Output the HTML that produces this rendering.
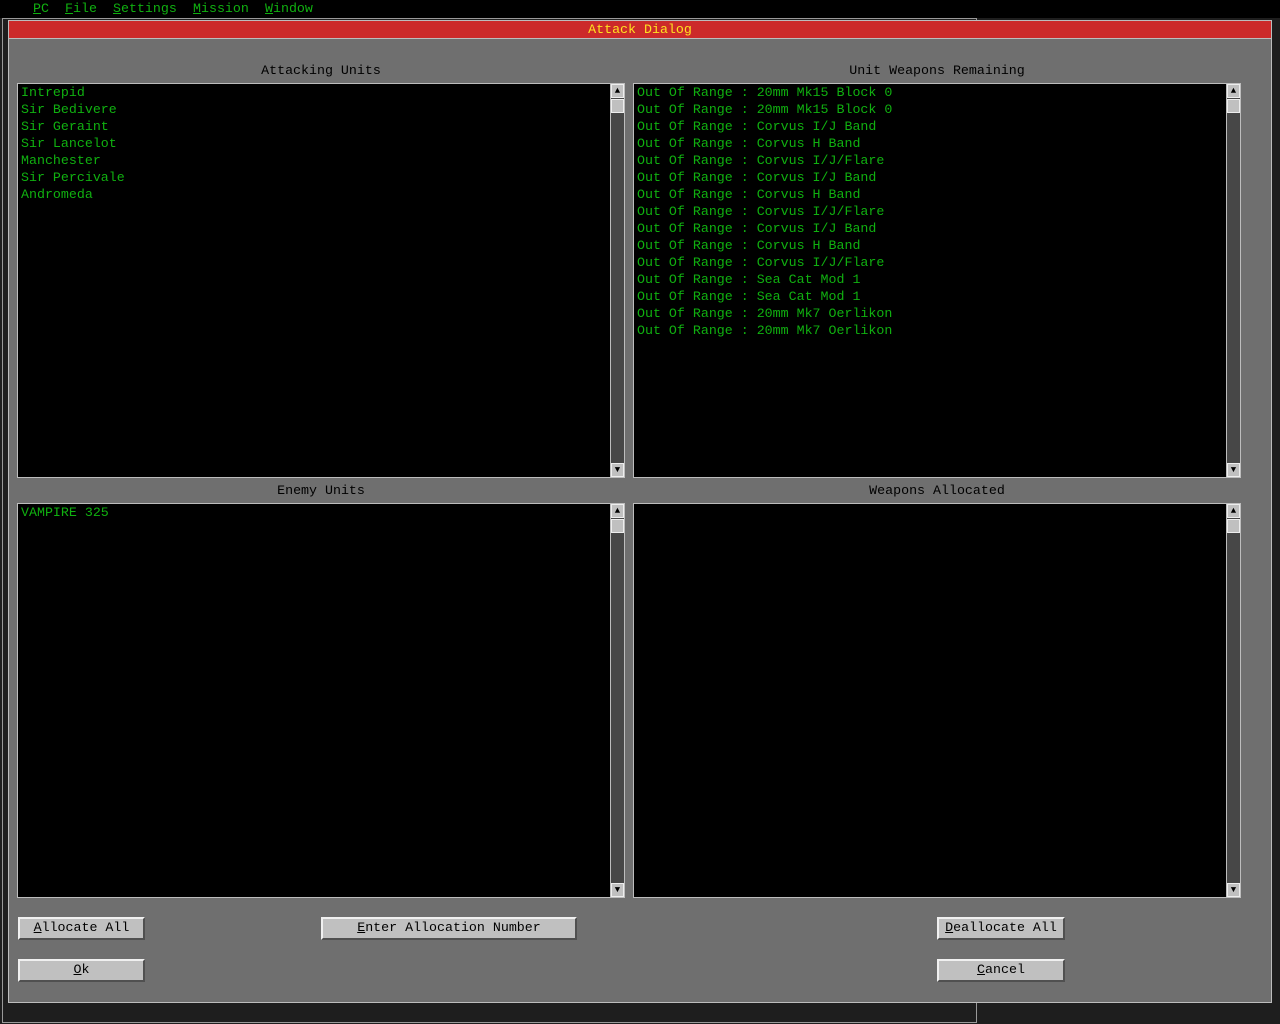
<!DOCTYPE html><html><head><style>
body{margin:0;width:1280px;height:1024px;background:#1e1e1e;position:relative;overflow:hidden;font-family:"Liberation Mono",monospace;font-size:13.3px}
.a{position:absolute}
.menu{left:0;top:0;width:1280px;height:18px;background:#000;color:#10b010}
.menu span{position:absolute;top:0;line-height:17px}
.menu u{text-decoration:underline}
#dlg{left:8px;top:20px;width:1262px;height:981px;background:#6f6f6f;border:1px solid #bdbdbd}
.title{left:0;top:0;width:1262px;height:17px;background:#cc2a2a;border-bottom:1px solid #bdbdbd;color:#ffe020;text-align:center;line-height:17px}
.lbl{color:#000;text-align:center;line-height:17px}
.list{background:#000;border:1px solid #bdbdbd;color:#10b010;line-height:17px;padding:0 3px;box-sizing:border-box;white-space:pre}
.sb{background:#474747;border:1px solid #bdbdbd;box-sizing:border-box;width:15px}
.btn{position:absolute;left:0;width:13px;height:14px;background:#c0c0c0;border:1px solid #eee;box-sizing:border-box;font-size:9px;line-height:12px;text-align:center;color:#000}
.b{background:#c0c0c0;border:2px solid;border-color:#f0f0f0 #505050 #505050 #f0f0f0;box-sizing:border-box;color:#000;text-align:center;line-height:18px;height:23px}
</style></head><body>
<div class="a menu"><span style="left:33px"><u>P</u>C</span><span style="left:65px"><u>F</u>ile</span><span style="left:113px"><u>S</u>ettings</span><span style="left:193px"><u>M</u>ission</span><span style="left:265px"><u>W</u>indow</span></div>
<div class="a" style="left:2px;top:18px;width:973px;height:1003px;border:1px solid #999"></div>
<div class="a" id="dlg">
<div class="a title">Attack Dialog</div>
<div class="a lbl" style="left:9px;top:41px;width:606px">Attacking Units</div>
<div class="a lbl" style="left:625px;top:41px;width:606px">Unit Weapons Remaining</div>
<div class="a lbl" style="left:9px;top:461px;width:606px">Enemy Units</div>
<div class="a lbl" style="left:625px;top:461px;width:606px">Weapons Allocated</div>
<div class="a list" style="left:8px;top:62px;width:595px;height:395px">Intrepid
Sir Bedivere
Sir Geraint
Sir Lancelot
Manchester
Sir Percivale
Andromeda</div>
<div class="a list" style="left:624px;top:62px;width:595px;height:395px">Out Of Range : 20mm Mk15 Block 0
Out Of Range : 20mm Mk15 Block 0
Out Of Range : Corvus I/J Band
Out Of Range : Corvus H Band
Out Of Range : Corvus I/J/Flare
Out Of Range : Corvus I/J Band
Out Of Range : Corvus H Band
Out Of Range : Corvus I/J/Flare
Out Of Range : Corvus I/J Band
Out Of Range : Corvus H Band
Out Of Range : Corvus I/J/Flare
Out Of Range : Sea Cat Mod 1
Out Of Range : Sea Cat Mod 1
Out Of Range : 20mm Mk7 Oerlikon
Out Of Range : 20mm Mk7 Oerlikon</div>
<div class="a list" style="left:8px;top:482px;width:595px;height:395px">VAMPIRE 325</div>
<div class="a list" style="left:624px;top:482px;width:595px;height:395px"></div>
<div class="a sb" style="left:601px;top:62px;height:395px"><div class="btn" style="top:0">&#9650;</div><div class="btn" style="top:15px"></div><div class="btn" style="bottom:0">&#9660;</div></div>
<div class="a sb" style="left:1217px;top:62px;height:395px"><div class="btn" style="top:0">&#9650;</div><div class="btn" style="top:15px"></div><div class="btn" style="bottom:0">&#9660;</div></div>
<div class="a sb" style="left:601px;top:482px;height:395px"><div class="btn" style="top:0">&#9650;</div><div class="btn" style="top:15px"></div><div class="btn" style="bottom:0">&#9660;</div></div>
<div class="a sb" style="left:1217px;top:482px;height:395px"><div class="btn" style="top:0">&#9650;</div><div class="btn" style="top:15px"></div><div class="btn" style="bottom:0">&#9660;</div></div>
<div class="a b" style="left:9px;top:896px;width:127px"><u>A</u>llocate All</div>
<div class="a b" style="left:312px;top:896px;width:256px"><u>E</u>nter Allocation Number</div>
<div class="a b" style="left:928px;top:896px;width:128px"><u>D</u>eallocate All</div>
<div class="a b" style="left:9px;top:938px;width:127px"><u>O</u>k</div>
<div class="a b" style="left:928px;top:938px;width:128px"><u>C</u>ancel</div>
</div>
</body></html>
